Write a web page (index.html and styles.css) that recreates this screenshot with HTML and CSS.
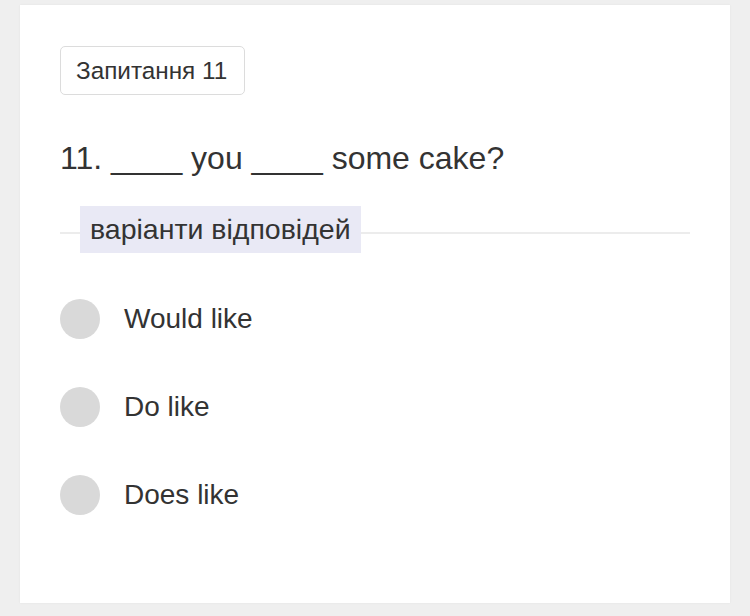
FILE: index.html
```html
<!DOCTYPE html>
<html lang="uk">
<head>
<meta charset="utf-8">
<link rel="stylesheet" href="styles.css">
</head>
<body>
<div class="card">
  <div class="badge">Запитання 11</div>
  <div class="question">11. ____ you ____ some cake?</div>
  <div class="divider">
    <span class="divider-label">варіанти відповідей</span>
  </div>
  <ul class="options">
    <li class="option"><span class="radio"></span><span class="option-text">Would like</span></li>
    <li class="option"><span class="radio"></span><span class="option-text">Do like</span></li>
    <li class="option"><span class="radio"></span><span class="option-text">Does like</span></li>
  </ul>
</div>
</body>
</html>
```

FILE: styles.css
```css
html, body {
  margin: 0;
  padding: 0;
  background: #efefef;
  font-family: "Liberation Sans", Arial, sans-serif;
  color: #333;
}
body {
  padding: 5px 20px 13px 20px;
}
.card {
  background: #fff;
  height: 598px;
  box-sizing: border-box;
  padding: 41px 40px 0 40px;
  box-shadow: 0 0 2px rgba(0,0,0,0.06);
}
.badge {
  display: inline-block;
  box-sizing: border-box;
  height: 49px;
  line-height: 47px;
  padding: 0 17px 0 15px;
  border: 1px solid #dcdcdc;
  border-radius: 5px;
  font-size: 24.3px;
  color: #333;
}
.question {
  margin-top: 44px;
  font-size: 32px;
  line-height: 38px;
  color: #333;
}
.divider {
  position: relative;
  margin-top: 29px;
  height: 47px;
  width: 630px;
  display: flex;
  align-items: center;
}
.divider::before {
  content: "";
  position: absolute;
  left: 0;
  right: 0;
  top: 26px;
  height: 2px;
  background: #ececec;
}
.divider-label {
  position: relative;
  margin-left: 20px;
  height: 47px;
  line-height: 47px;
  padding: 0 10px;
  background: #e9e9f5;
  font-size: 28.5px;
  color: #333;
}
.options {
  list-style: none;
  margin: 46px 0 0 0;
  padding: 0;
  display: flex;
  flex-direction: column;
  gap: 48px;
}
.option {
  display: flex;
  align-items: center;
  height: 40px;
}
.radio {
  width: 40px;
  height: 40px;
  border-radius: 50%;
  background: #d9d9d9;
  flex: none;
}
.option-text {
  margin-left: 24px;
  font-size: 28px;
  color: #333;
}
```
